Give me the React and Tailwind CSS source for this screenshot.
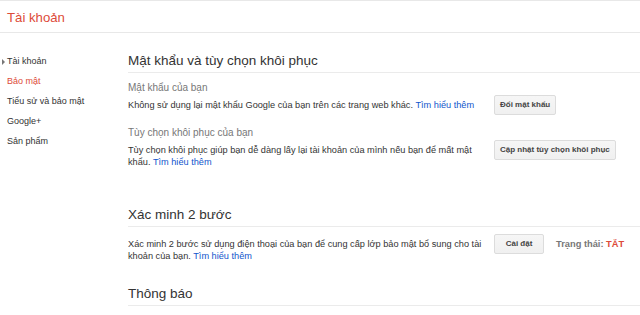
import React from 'react';

const navItems = [
    { label: 'Tài khoản', arrow: true },
    { label: 'Bảo mật', active: true },
    { label: 'Tiểu sử và bảo mật' },
    { label: 'Google+' },
    { label: 'Sản phẩm' },
];

const Button = ({ children }) => (
    <button className="ml-[10px] h-[20px] min-w-[50px] shrink-0 rounded-[2px] border border-[#dcdcdc] bg-linear-to-b from-[#f6f6f6] to-[#f0f0f0] px-[5px] text-[8px] font-bold text-[#444]">
        {children}
    </button>
);

const LearnMore = () => <a className="text-[#15c]">Tìm hiểu thêm</a>;

const SectionTitle = ({ children }) => (
    <h2 className="border-b border-[#ebebeb] pb-px text-[13.5px] leading-[20px] text-[#333]">{children}</h2>
);

const App = () => {
    return (
        <div className="min-h-screen overflow-hidden bg-white font-['Liberation_Sans',Arial,sans-serif] text-[#333]">
            <header className="flex h-[33px] items-center border-y border-[#e8e8e8] pl-[7px] pt-[2px] text-[13.2px] text-[#dd4b39]">
                Tài khoản
            </header>

            <div className="flex">
                <nav className="w-[128px] shrink-0 pt-[19px]">
                    {navItems.map((item) => (
                        <div
                            key={item.label}
                            className={`flex h-[20px] items-center text-[9px] ${item.arrow ? 'pl-[2px]' : 'pl-[7px]'} ${item.active ? 'text-[#dd4b39]' : 'text-[#333]'}`}
                        >
                            {item.arrow && (
                                <span className="mr-[2px] h-0 w-0 border-y-[3px] border-l-[3px] border-y-transparent border-l-[#777]" />
                            )}
                            {item.label}
                        </div>
                    ))}
                </nav>

                <main className="flex-1 pt-[18px]">
                    <SectionTitle>Mật khẩu và tùy chọn khôi phục</SectionTitle>

                    <h3 className="mt-[8px] text-[10px] leading-[14px] text-[#777]">Mật khẩu của bạn</h3>
                    <div className="flex items-start">
                        <p className="w-[356px] pt-[4px] text-[9.2px] leading-[12px] text-[#333]">
                            Không sử dụng lại mật khẩu Google của bạn trên các trang web khác. <LearnMore />
                        </p>
                        <Button>Đổi mật khẩu</Button>
                    </div>

                    <h3 className="mt-[11px] text-[10px] leading-[14px] text-[#777]">Tùy chọn khôi phục của bạn</h3>
                    <div className="flex items-start">
                        <p className="w-[356px] pt-[4px] text-[9.2px] leading-[12px] text-[#333]">
                            Tùy chọn khôi phục giúp bạn dễ dàng lấy lại tài khoản của mình nếu bạn để mất mật khẩu. <LearnMore />
                        </p>
                        <Button>Cập nhật tùy chọn khôi phục</Button>
                    </div>

                    <div className="mt-[37px]">
                        <SectionTitle>Xác minh 2 bước</SectionTitle>
                    </div>
                    <div className="mt-[7px] flex items-start">
                        <p className="w-[356px] pt-[4px] text-[9.2px] leading-[12px] text-[#333]">
                            Xác minh 2 bước sử dụng điện thoại của bạn để cung cấp lớp bảo mật bổ sung cho tài khoản của bạn. <LearnMore />
                        </p>
                        <Button>Cài đặt</Button>
                        <span className="ml-[12px] pt-[4px] text-[9.3px] font-bold leading-[12px] text-[#777]">
                            Trạng thái: <span className="text-[#dd4b39]">TẮT</span>
                        </span>
                    </div>

                    <div className="mt-[22px]">
                        <SectionTitle>Thông báo</SectionTitle>
                    </div>
                </main>
            </div>
        </div>
    );
};

export default App;
